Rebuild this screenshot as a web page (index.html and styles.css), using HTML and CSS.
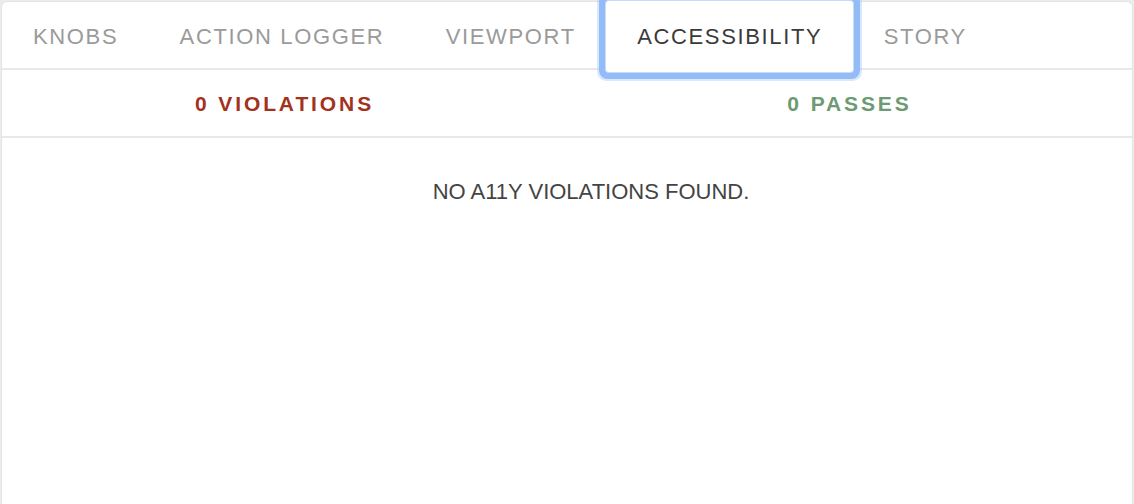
FILE: index.html
```html
<!DOCTYPE html>
<html>
<head>
<meta charset="utf-8">
<link rel="stylesheet" href="styles.css">
</head>
<body>
<div class="panel">
  <nav class="tabs">
    <button class="tab">Knobs</button>
    <button class="tab">Action Logger</button>
    <button class="tab">Viewport</button>
    <button class="tab active">Accessibility</button>
    <button class="tab">Story</button>
  </nav>
  <div class="summary">
    <div class="count violations">0 Violations</div>
    <div class="count passes">0 Passes</div>
  </div>
  <div class="content">
    <p class="empty">No a11y violations found.</p>
  </div>
</div>
</body>
</html>
```

FILE: styles.css
```css
html, body {
  margin: 0;
  padding: 0;
  height: 100%;
}
body {
  background: #ececec;
  padding: 1px 1px 0 1px;
  box-sizing: border-box;
  font-family: "Liberation Sans", Arial, sans-serif;
  overflow: hidden;
}
.panel {
  background: #fff;
  border: 1px solid #e4e4e4;
  border-bottom: none;
  border-radius: 6px 6px 0 0;
  height: 100%;
  box-sizing: border-box;
}
.tabs {
  display: flex;
  align-items: flex-start;
  height: 66px;
  border-bottom: 2px solid #e8e8e8;
}
.tab {
  font-family: inherit;
  background: transparent;
  border: none;
  margin: 0;
  padding: 3px 30.3px 0 31px;
  font-size: 22px;
  letter-spacing: 1.65px;
  text-transform: uppercase;
  color: #9a9a9a;
  height: 66px;
  cursor: pointer;
}
.tab.active {
  color: #3a3a3a;
  background: #fff;
  position: relative;
  z-index: 1;
  height: 71px;
  margin-top: -1px;
  padding-top: 0;
  border-radius: 3px;
  box-shadow: 0 0 0 1px #c7dbfa, 0 0 0 7px #93bcf6, 0 0 0 9px rgba(147, 188, 246, 0.35);
}
.summary {
  display: flex;
  height: 66px;
  border-bottom: 2px solid #e8e8e8;
}
.count {
  flex: 1;
  display: flex;
  align-items: center;
  justify-content: center;
  font-size: 21px;
  font-weight: 700;
  letter-spacing: 2.9px;
  text-transform: uppercase;
  padding-top: 2px;
}
.violations { color: #a3321c; }
.passes { color: #6c9a72; }
.content {
  display: flex;
  justify-content: center;
  padding-left: 48px;
}
.empty {
  margin: 41px 0 0;
  font-size: 22px;
  color: #444;
  text-transform: uppercase;
}
```
